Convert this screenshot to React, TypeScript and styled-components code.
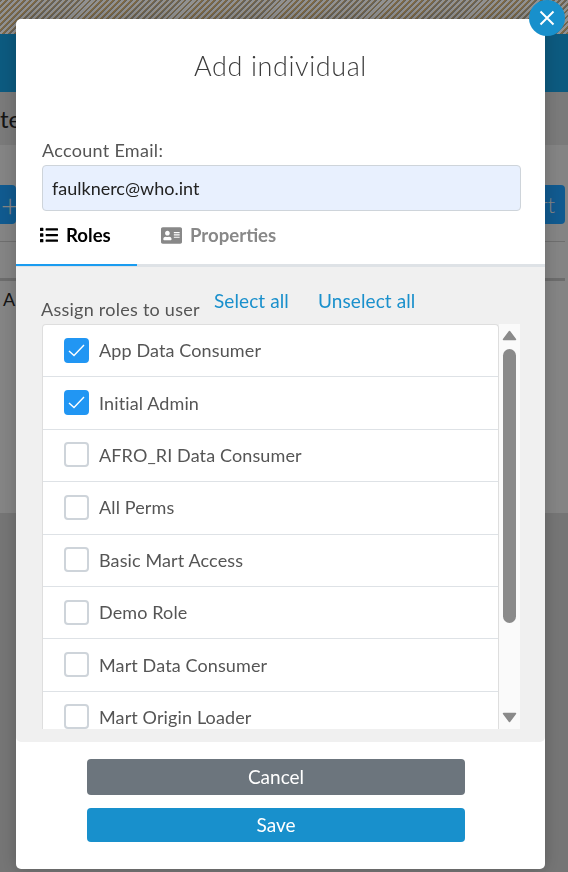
import { createGlobalStyle, styled } from "styled-components";
import { FaAddressCard, FaList } from "react-icons/fa";

const roles = [
  { id: "app", title: "App Data Consumer", checked: true },
  { id: "init", title: "Initial Admin", checked: true },
  { id: "afro", title: "AFRO_RI Data Consumer", checked: false },
  { id: "all", title: "All Perms", checked: false },
  { id: "basic", title: "Basic Mart Access", checked: false },
  { id: "demo", title: "Demo Role", checked: false },
  { id: "mart", title: "Mart Data Consumer", checked: false },
  { id: "origin", title: "Mart Origin Loader", checked: false },
];

export default function App() {
  return (
    <>
      <GlobalStyle />
      <Page>
        <Stripe />
        <Banner />
        <TitleBar>te</TitleBar>
        <Toolbar>
          <PageButton $side="left">+</PageButton>
          <PageButton $side="right">rt</PageButton>
        </Toolbar>
        <TableHead />
        <TableBody>A</TableBody>
        <PageRest />
      </Page>
      <Overlay>
        <Modal>
          <CloseButton aria-label="Close">
            <svg width="18" height="18" viewBox="0 0 18 18" fill="none">
              <path d="M2.5 2.5 15.5 15.5M15.5 2.5 2.5 15.5" stroke="#fff" strokeWidth="2" />
            </svg>
          </CloseButton>
          <Title>Add individual</Title>
          <Field>
            <FieldLabel htmlFor="email">Account Email:</FieldLabel>
            <EmailInput id="email" defaultValue="faulknerc@who.int" />
          </Field>
          <Tabs>
            <Tab $active>
              <FaList size={18} />
              Roles
            </Tab>
            <Tab>
              <FaAddressCard size={21} />
              Properties
            </Tab>
          </Tabs>
          <Panel>
            <PanelHead>
              <AssignLabel>Assign roles to user</AssignLabel>
              <PanelLink>Select all</PanelLink>
              <PanelLink>Unselect all</PanelLink>
            </PanelHead>
            <ListFrame>
              <RoleList>
                {roles.map((role) => (
                  <RoleRow key={role.id}>
                    <CheckBox $checked={role.checked}>
                      {role.checked && (
                        <svg width="17" height="13" viewBox="0 0 17 13" fill="none">
                          <path d="M1 7 6 11.5 16 1" stroke="#fff" strokeWidth="1.4" />
                        </svg>
                      )}
                    </CheckBox>
                    {role.title}
                  </RoleRow>
                ))}
              </RoleList>
              <ScrollBar>
                <ScrollArrow width="15" height="11" viewBox="0 0 15 11">
                  <path d="M7.5 1.5 13.5 9.5H1.5Z" />
                </ScrollArrow>
                <ScrollThumb />
                <ScrollArrow width="15" height="11" viewBox="0 0 15 11">
                  <path d="M1.5 1.5H13.5L7.5 9.5Z" />
                </ScrollArrow>
              </ScrollBar>
            </ListFrame>
          </Panel>
          <Footer>
            <ActionButton $variant="cancel">Cancel</ActionButton>
            <ActionButton $variant="save">Save</ActionButton>
          </Footer>
        </Modal>
      </Overlay>
    </>
  );
}

const GlobalStyle = createGlobalStyle`
  html, body {
    margin: 0;
    height: 100%;
    overflow: hidden;
    background: #dcdcdc;
    font-family: "Lato", "Open Sans", sans-serif;
  }
  * {
    box-sizing: border-box;
  }
`;

const Page = styled.div`
  width: 568px;
  height: 872px;
  display: flex;
  flex-direction: column;
  color: #222;
`;

const Stripe = styled.div`
  height: 34px;
  background: repeating-linear-gradient(
    135deg,
    #d0ae72 0 1px,
    #a8a294 1px 2px,
    #f2f2f2 2px 4.2px
  );
`;

const Banner = styled.div`
  height: 58px;
  background: #1596d4;
`;

const TitleBar = styled.div`
  height: 53px;
  padding-top: 12px;
  background: #cbcbcb;
  font-size: 24px;
  line-height: 30px;
`;

const Toolbar = styled.div`
  height: 97px;
  margin-right: 3px;
  padding-top: 40px;
  display: flex;
  justify-content: space-between;
  align-items: flex-start;
  border-bottom: 1px solid #b8b8b8;
`;

const PageButton = styled.div<{ $side: "left" | "right" }>`
  width: ${({ $side }) => ($side === "left" ? "20px" : "60px")};
  height: 39px;
  margin-left: ${({ $side }) => ($side === "left" ? "-4px" : "0")};
  padding: ${({ $side }) => ($side === "left" ? "0 0 0 8px" : "0 10px 0 0")};
  display: flex;
  align-items: center;
  justify-content: ${({ $side }) => ($side === "left" ? "center" : "flex-end")};
  border-radius: 4px;
  background: #1c96ee;
  color: #dcdcdc;
  font-size: ${({ $side }) => ($side === "left" ? "32px" : "22px")};
  font-weight: 300;
`;

const TableHead = styled.div`
  height: 39px;
  margin-right: 3px;
  border-bottom: 3px solid #b4b4b4;
`;

const TableBody = styled.div`
  height: 232px;
  padding: 6px 3px;
  font-size: 18px;
  line-height: 24px;
`;

const PageRest = styled.div`
  flex: 1;
  background: #c3c3c3;
`;

const Overlay = styled.div`
  position: fixed;
  inset: 0;
  padding: 19px 23px 3px 16px;
  background: rgba(0, 0, 0, 0.4);
`;

const Modal = styled.div`
  position: relative;
  height: 850px;
  display: flex;
  flex-direction: column;
  border-radius: 5px;
  background: #fff;
  box-shadow: 0 0 16px rgba(0, 0, 0, 0.22);
`;

const CloseButton = styled.button`
  position: absolute;
  top: -19px;
  right: -20px;
  width: 36px;
  height: 36px;
  padding: 0;
  display: flex;
  align-items: center;
  justify-content: center;
  border: 0;
  border-radius: 50%;
  background: #1890cc;
`;

const Title = styled.h2`
  margin: 0;
  height: 94px;
  padding-top: 29px;
  text-align: center;
  font-size: 27px;
  font-weight: 300;
  line-height: 36px;
  letter-spacing: 0.6px;
  color: #3c3c3c;
`;

const Field = styled.div`
  padding: 27px 24px 0 26px;
  display: flex;
  flex-direction: column;
`;

const FieldLabel = styled.label`
  height: 25px;
  font-size: 18px;
  line-height: 20px;
  letter-spacing: 0.3px;
  color: #555;
`;

const EmailInput = styled.input`
  height: 46px;
  padding: 0 9px;
  border: 1px solid #ced4da;
  border-radius: 4px;
  background: #e8f0fe;
  font-family: inherit;
  font-size: 18px;
  color: #222;
  outline: none;
`;

const Tabs = styled.div`
  height: 56px;
  display: flex;
  flex-shrink: 0;
  border-bottom: 3px solid #dee2e6;
`;

const Tab = styled.div<{ $active?: boolean }>`
  width: ${({ $active }) => ($active ? "121px" : "auto")};
  height: 55px;
  padding: 0 0 5px 24px;
  display: flex;
  align-items: center;
  gap: 8px;
  border-bottom: 2px solid ${({ $active }) => ($active ? "#1a9cf0" : "transparent")};
  font-size: 18.6px;
  font-weight: 700;
  color: ${({ $active }) => ($active ? "#000" : "#888")};
`;

const Panel = styled.div`
  height: 475px;
  padding: 24px 25px 13px 26px;
  display: flex;
  flex-direction: column;
  border-radius: 0 0 5px 5px;
  background: #f0f0f0;
`;

const PanelHead = styled.div`
  height: 33px;
  display: flex;
  align-items: flex-start;
  gap: 29px;
  font-size: 18px;
`;

const AssignLabel = styled.span`
  width: 172px;
  margin-left: -1px;
  margin-right: -28px;
  padding-top: 8px;
  line-height: 20px;
  letter-spacing: 0.25px;
  white-space: nowrap;
  color: #555;
`;

const PanelLink = styled.a`
  font-size: 19px;
  line-height: 20px;
  letter-spacing: 0.1px;
  color: #1a90cc;
`;

const ListFrame = styled.div`
  height: 405px;
  display: flex;
  overflow: hidden;
`;

const RoleList = styled.div`
  width: 458px;
  border: 1px solid #dedede;
  border-bottom: 0;
  border-radius: 4px 4px 0 0;
  background: #fff;
`;

const RoleRow = styled.div`
  height: 52.4px;
  padding: 0 0 1px 21px;
  display: flex;
  align-items: center;
  gap: 10px;
  border-bottom: 1px solid #dee2e6;
  font-size: 18px;
  letter-spacing: 0.12px;
  color: #555;
`;

const CheckBox = styled.span<{ $checked: boolean }>`
  width: 25px;
  height: 25px;
  display: flex;
  align-items: center;
  justify-content: center;
  border: 2px solid ${({ $checked }) => ($checked ? "#2196f3" : "#ced4da")};
  border-radius: 4px;
  background: ${({ $checked }) => ($checked ? "#2196f3" : "#fff")};
`;

const ScrollBar = styled.div`
  width: 21px;
  padding: 6px 4px 6px;
  display: flex;
  flex-direction: column;
  align-items: center;
  background: #fafafa;
`;

const ScrollArrow = styled.svg`
  flex-shrink: 0;
  fill: #8a8a8a;
  stroke: #8a8a8a;
  stroke-width: 1.5;
  stroke-linejoin: round;
`;

const ScrollThumb = styled.div`
  width: 13px;
  flex-shrink: 0;
  height: 274px;
  margin: 8px 0 auto;
  border-radius: 7px;
  background: #8a8a8a;
`;

const Footer = styled.div`
  padding: 17px 80px 0 71px;
  display: flex;
  flex-direction: column;
  gap: 13px;
`;

const ActionButton = styled.button<{ $variant: "cancel" | "save" }>`
  height: ${({ $variant }) => ($variant === "cancel" ? "36px" : "34px")};
  padding: 0 0 2px;
  border: 0;
  border-radius: 4px;
  background: ${({ $variant }) => ($variant === "cancel" ? "#6c757d" : "#1890cc")};
  font-family: inherit;
  font-size: 19px;
  color: #fff;
`;
